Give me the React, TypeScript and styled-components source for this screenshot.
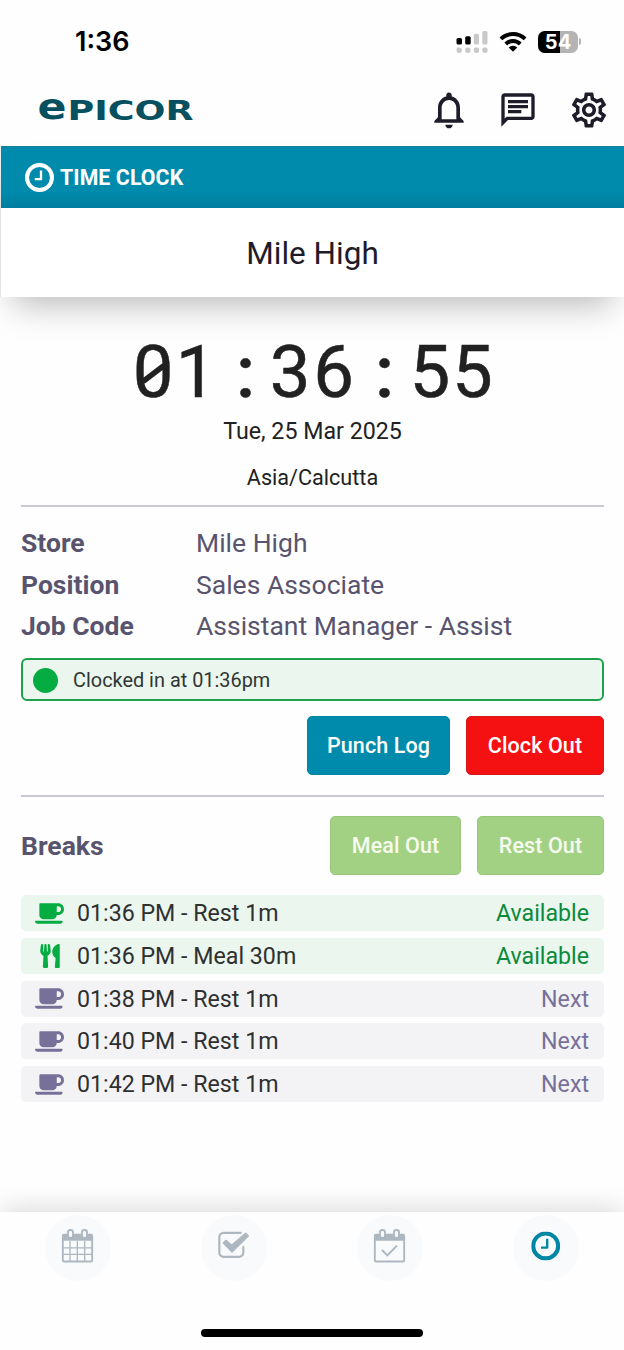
import React from 'react';
import styled, { createGlobalStyle } from 'styled-components';
import { MdOutlineNotifications, MdOutlineChat, MdOutlineSettings } from 'react-icons/md';
import { FaCoffee, FaUtensils } from 'react-icons/fa';

const GlobalStyle = createGlobalStyle`
  * { box-sizing: border-box; }
  body { margin: 0; background: #fefefe; font-family: Roboto, 'Liberation Sans', sans-serif; color: #212121; }
`;

const Screen = styled.div`
  width: 624px;
  height: 1350px;
  display: flex;
  flex-direction: column;
  overflow: hidden;
  background: #fefefe;
`;

const StatusBar = styled.div`
  height: 72px;
  padding: 11px 43px 0 75px;
  display: flex;
  align-items: center;
  flex: none;
`;

const StatusTime = styled.span`
  flex: 1;
  font: 600 27px Inter, sans-serif;
  letter-spacing: 0;
  color: #000;
`;

const StatusIcons = styled.div`
  display: flex;
  align-items: center;
  gap: 11px;
  svg { display: block; }
`;

const Battery = styled.div`
  width: 40px;
  height: 22px;
  border-radius: 6.5px;
  background: linear-gradient(90deg, #000 55%, #b4b4b4 55%);
  color: #fff;
  font: 700 20px/22px Inter, sans-serif;
  text-align: center;
`;

const BatteryGroup = styled.div`
  display: flex;
  align-items: center;
  gap: 1px;
`;

const BatteryTip = styled.i`
  width: 2px;
  height: 7px;
  border-radius: 0 2px 2px 0;
  background: #b4b4b4;
`;

const Header = styled.header`
  height: 74px;
  flex: none;
  display: flex;
  align-items: center;
  padding: 2px 14px 0 34px;
  color: #1e1c29;
  > svg { display: block; }
`;

const HeaderIcons = styled.div`
  margin-left: auto;
  display: flex;
  align-items: center;
`;

const IconButton = styled.button<{ $gap?: number }>`
  display: flex;
  padding: 0;
  margin: 0 0 0 ${(p) => p.$gap ?? 0}px;
  border: 0;
  background: none;
  color: inherit;
`;

const TopPanel = styled.section`
  margin-left: 1px;
  flex: none;
  box-shadow: 0 20px 32px -12px rgba(0, 0, 0, 0.27), -1px 0 0 #f0f0f0;
`;

const Banner = styled.div`
  height: 62px;
  display: flex;
  align-items: center;
  gap: 6px;
  padding: 0 24px;
  border-top: 1px solid #187f94;
  background: linear-gradient(#008bac 70%, #007f9f);
  color: #fff;
  font-size: 21.3px;
  font-weight: 700;
  letter-spacing: 0.1px;
`;

const StoreTitle = styled.h1`
  margin: 0;
  height: 89px;
  background: #fff;
  font-size: 31.5px;
  font-weight: 400;
  line-height: 91px;
  text-align: center;
  color: #1e1c29;
`;

const Content = styled.main`
  flex: 1;
  padding: 34px 20px 0 21px;
`;

const Clock = styled.div`
  height: 84px;
  display: flex;
  justify-content: center;
  font-size: 72.5px;
  line-height: 84px;
  color: #212121;
  -webkit-text-stroke: 0.5px #212121;
`;

const Cell = styled.span<{ $w?: number }>`
  position: relative;
  width: ${(p) => p.$w ?? 43}px;
  text-align: center;
`;

const Colon = styled.span<{ $w: number }>`
  width: ${(p) => p.$w}px;
  padding-left: 5px;
  font-weight: 500;
  text-align: center;
`;

const ZeroSlash = styled.svg`
  position: absolute;
  left: 8px;
  top: 30px;
`;

const CenterLine = styled.div<{ $size: number; $h: number; $line: number }>`
  height: ${(p) => p.$h}px;
  line-height: ${(p) => p.$line}px;
  font-size: ${(p) => p.$size}px;
  text-align: center;
`;

const Rule = styled.hr<{ $top?: number }>`
  margin: ${(p) => p.$top ?? 0}px 0 0;
  height: 2px;
  border: 0;
  background: #c9c9d2;
`;

const Details = styled.dl`
  margin: 0;
  padding-top: 15px;
  display: grid;
  grid-template-columns: 175px 1fr;
  grid-auto-rows: 41.5px;
  align-items: center;
  font-size: 26.5px;
  color: #59546e;
  dt { font-weight: 700; }
  dd { margin: 0; }
`;

const ClockedIn = styled.div`
  margin-top: 11.5px;
  height: 43px;
  display: flex;
  align-items: center;
  gap: 15px;
  padding: 1px 10px 0;
  border: 2px solid #1fa04d;
  border-radius: 6px;
  background: #eaf6ee;
  color: #303633;
  font-size: 19.9px;
  line-height: 25px;
`;

const Dot = styled.i`
  width: 25px;
  height: 25px;
  border-radius: 50%;
  background: #05ac41;
`;

const Actions = styled.div<{ $top: number }>`
  margin-top: ${(p) => p.$top}px;
  display: flex;
  justify-content: flex-end;
  align-items: center;
  gap: 16px;
`;

const tones = {
  teal: ['#008bac', '#0085a4'],
  red: ['#f51111', '#d41818'],
  green: ['#a3d184', '#98c67a'],
};

const Button = styled.button<{ $tone: keyof typeof tones; $w: number }>`
  width: ${(p) => p.$w}px;
  height: 59px;
  padding: 0;
  border: 1px solid ${(p) => tones[p.$tone][1]};
  border-radius: 5px;
  background: ${(p) => tones[p.$tone][0]};
  color: ${(p) => (p.$tone === 'green' ? '#f6fbf0' : '#fff')};
  font: 500 21.5px Roboto, sans-serif;
  letter-spacing: 0.1px;
`;

const BreaksTitle = styled.h2`
  margin: 0 auto 0 0;
  padding-bottom: 1px;
  font-size: 26.5px;
  font-weight: 700;
  color: #59546e;
`;

const BreakList = styled.ul`
  margin: 20px 0 0;
  padding: 0;
  list-style: none;
  display: flex;
  flex-direction: column;
  gap: 6.75px;
`;

const BreakRow = styled.li<{ $open: boolean }>`
  height: 36px;
  display: flex;
  align-items: center;
  padding: 0 15px 0 14px;
  border-radius: 5px;
  background: ${(p) => (p.$open ? '#eaf6ee' : '#f3f3f6')};
  color: #2e3030;
  font-size: 23.2px;
  svg { color: ${(p) => (p.$open ? '#05ac41' : '#77719a')}; }
`;

const BreakIcon = styled.span`
  width: 29px;
  margin-right: 13px;
  display: flex;
  justify-content: center;
`;

const BreakStatus = styled.span<{ $open: boolean }>`
  margin-left: auto;
  color: ${(p) => (p.$open ? '#0b8a3b' : '#77719a')};
`;

const BottomNav = styled.nav`
  height: 138px;
  flex: none;
  display: flex;
  flex-direction: column;
  align-items: center;
  background: #fefefe;
  box-shadow: 0 -6px 24px -2px rgba(0, 0, 0, 0.14);
`;

const Tabs = styled.div`
  width: 100%;
  display: grid;
  grid-template-columns: repeat(4, 156px);
  justify-items: center;
  padding-top: 3px;
`;

const Tab = styled.button<{ $active?: boolean }>`
  width: 66px;
  height: 66px;
  padding: 0;
  border: 0;
  border-radius: 50%;
  background: #f8fafc;
  color: ${(p) => (p.$active ? '#0086a5' : '#adb7c0')};
  svg { display: block; }
`;

const HomeIndicator = styled.div`
  width: 222px;
  height: 8px;
  margin-top: 48px;
  border-radius: 4px;
  background: #000;
`;

const Logo = () => (
  <svg width="168" height="60" viewBox="-4 -18 168 60" fill="#06505f" fontFamily="DejaVu Sans" fontWeight="700">
    <text x="-0.5" y="21.2" fontSize="35.5" textLength="29" lengthAdjust="spacingAndGlyphs">e</text>
    <text x="29.5" y="21.5" fontSize="27.2" textLength="126" lengthAdjust="spacingAndGlyphs">PICOR</text>
  </svg>
);

const Signal = () => (
  <svg width="32" height="22" viewBox="0.5 0 32 22" fill="#c9c9c9" overflow="visible">
    <rect x="0" y="7" width="5.5" height="6.5" rx="1.5" fill="#000" />
    <rect x="8.7" y="5.3" width="5.5" height="8.2" rx="1.5" fill="#000" />
    <rect x="17.3" y="2.8" width="5.2" height="10.7" rx="1.5" />
    <rect x="25.8" y="0" width="5.2" height="13.5" rx="1.5" />
    {[0, 8.7, 17.3, 25.8].map((x) => (
      <rect key={x} x={x} y="16.6" width="5.3" height="5.3" rx="1.8" />
    ))}
  </svg>
);

const Wifi = () => (
  <svg width="27" height="20" viewBox="0.5 0 27 20" fill="none" stroke="#000" overflow="visible">
    <path d="M1.4 6.9a17.3 17.3 0 0 1 24.2 0" strokeWidth="4" />
    <path d="M6.3 12a10.2 10.2 0 0 1 14.4 0" strokeWidth="4" />
    <path d="M13.5 19.8 9.2 15.6a6 6 0 0 1 8.6 0Z" fill="#000" stroke="none" />
  </svg>
);

const ClockFace = ({ size }: { size: number }) => (
  <svg width={size} height={size} viewBox="0 0 86 86" fill="none" stroke="currentColor">
    <circle cx="43" cy="43" r="37" strokeWidth="12" />
    <path d="M47.5 22v26H29" strokeWidth="7" strokeLinejoin="round" />
  </svg>
);

const CalendarFrame = ({ children }: { children: React.ReactNode }) => (
  <svg width="66" height="66" viewBox="0 0 198 198" fill="none" stroke="currentColor">
    <rect x="53.5" y="59" width="88" height="80.5" rx="4" strokeWidth="5.5" />
    <rect x="51" y="57" width="93" height="20" rx="5" fill="currentColor" stroke="none" />
    <rect x="69" y="45" width="15" height="24" rx="7" fill="#f8fafc" strokeWidth="5.5" />
    <rect x="111" y="45" width="15" height="24" rx="7" fill="#f8fafc" strokeWidth="5.5" />
    {children}
  </svg>
);

const CheckBoxIcon = () => (
  <svg width="66" height="66" viewBox="0 0 198 198" fill="none" stroke="currentColor">
    <path d="M119 53.5H68a13 13 0 0 0-13 13v46a13 13 0 0 0 13 13h46a13 13 0 0 0 13-13V96" strokeWidth="6.5" strokeLinecap="round" />
    <path d="M67 84 75 76 92 91 134 54.5 142 63 93 111Z" fill="currentColor" strokeWidth="4" strokeLinejoin="round" />
  </svg>
);

const breaks = [
  { label: '01:36 PM - Rest 1m', open: true },
  { label: '01:36 PM - Meal 30m', open: true, meal: true },
  { label: '01:38 PM - Rest 1m', open: false },
  { label: '01:40 PM - Rest 1m', open: false },
  { label: '01:42 PM - Rest 1m', open: false },
];

export default function App() {
  return (
    <Screen>
      <GlobalStyle />
      <StatusBar>
        <StatusTime>1:36</StatusTime>
        <StatusIcons>
          <Signal />
          <Wifi />
          <BatteryGroup>
            <Battery>54</Battery>
            <BatteryTip />
          </BatteryGroup>
        </StatusIcons>
      </StatusBar>
      <Header>
        <Logo />
        <HeaderIcons>
          <IconButton><MdOutlineNotifications size={44} /></IconButton>
          <IconButton $gap={26.5}><MdOutlineChat size={40} /></IconButton>
          <IconButton $gap={30.5}><MdOutlineSettings size={42} /></IconButton>
        </HeaderIcons>
      </Header>
      <TopPanel>
        <Banner>
          <ClockFace size={29} />
          TIME CLOCK
        </Banner>
        <StoreTitle>Mile High</StoreTitle>
      </TopPanel>
      <Content>
        <Clock>
          <Cell>
            0
            <ZeroSlash width="26" height="26" viewBox="0 0 26 26" stroke="currentColor" strokeWidth="5.5">
              <path d="M3 20.5 24 4.5" />
            </ZeroSlash>
          </Cell>
          <Cell>1</Cell>
          <Colon $w={51}>:</Colon>
          <Cell>3</Cell>
          <Cell $w={44}>6</Cell>
          <Colon $w={53}>:</Colon>
          <Cell $w={42.5}>5</Cell>
          <Cell $w={42.5}>5</Cell>
        </Clock>
        <CenterLine $size={23.2} $h={34} $line={32}>Tue, 25 Mar 2025</CenterLine>
        <CenterLine $size={21.6} $h={56} $line={58}>Asia/Calcutta</CenterLine>
        <Rule />
        <Details>
          <dt>Store</dt>
          <dd>Mile High</dd>
          <dt>Position</dt>
          <dd>Sales Associate</dd>
          <dt>Job Code</dt>
          <dd>Assistant Manager - Assist</dd>
        </Details>
        <ClockedIn>
          <Dot />
          Clocked in at 01:36pm
        </ClockedIn>
        <Actions $top={15}>
          <Button $tone="teal" $w={143}>Punch Log</Button>
          <Button $tone="red" $w={138}>Clock Out</Button>
        </Actions>
        <Rule $top={20} />
        <Actions $top={19}>
          <BreaksTitle>Breaks</BreaksTitle>
          <Button $tone="green" $w={131}>Meal Out</Button>
          <Button $tone="green" $w={127}>Rest Out</Button>
        </Actions>
        <BreakList>
          {breaks.map((b) => (
            <BreakRow key={b.label} $open={b.open}>
              <BreakIcon>{b.meal ? <FaUtensils size={24} /> : <FaCoffee size={29} />}</BreakIcon>
              {b.label}
              <BreakStatus $open={b.open}>{b.open ? 'Available' : 'Next'}</BreakStatus>
            </BreakRow>
          ))}
        </BreakList>
      </Content>
      <BottomNav>
        <Tabs>
          <Tab>
            <CalendarFrame>
              <path d="M54 98.5h87M54 118h87M75 78v60M97 78v60M119 78v60" strokeWidth="4" />
            </CalendarFrame>
          </Tab>
          <Tab><CheckBoxIcon /></Tab>
          <Tab>
            <CalendarFrame>
              <path d="m75 105 16 16 29-29" strokeWidth="6" />
            </CalendarFrame>
          </Tab>
          <Tab $active>
            <svg width="66" height="66" viewBox="0 0 66 66">
              <g transform="translate(18.2 16.4)"><ClockFace size={29} /></g>
            </svg>
          </Tab>
        </Tabs>
        <HomeIndicator />
      </BottomNav>
    </Screen>
  );
}
